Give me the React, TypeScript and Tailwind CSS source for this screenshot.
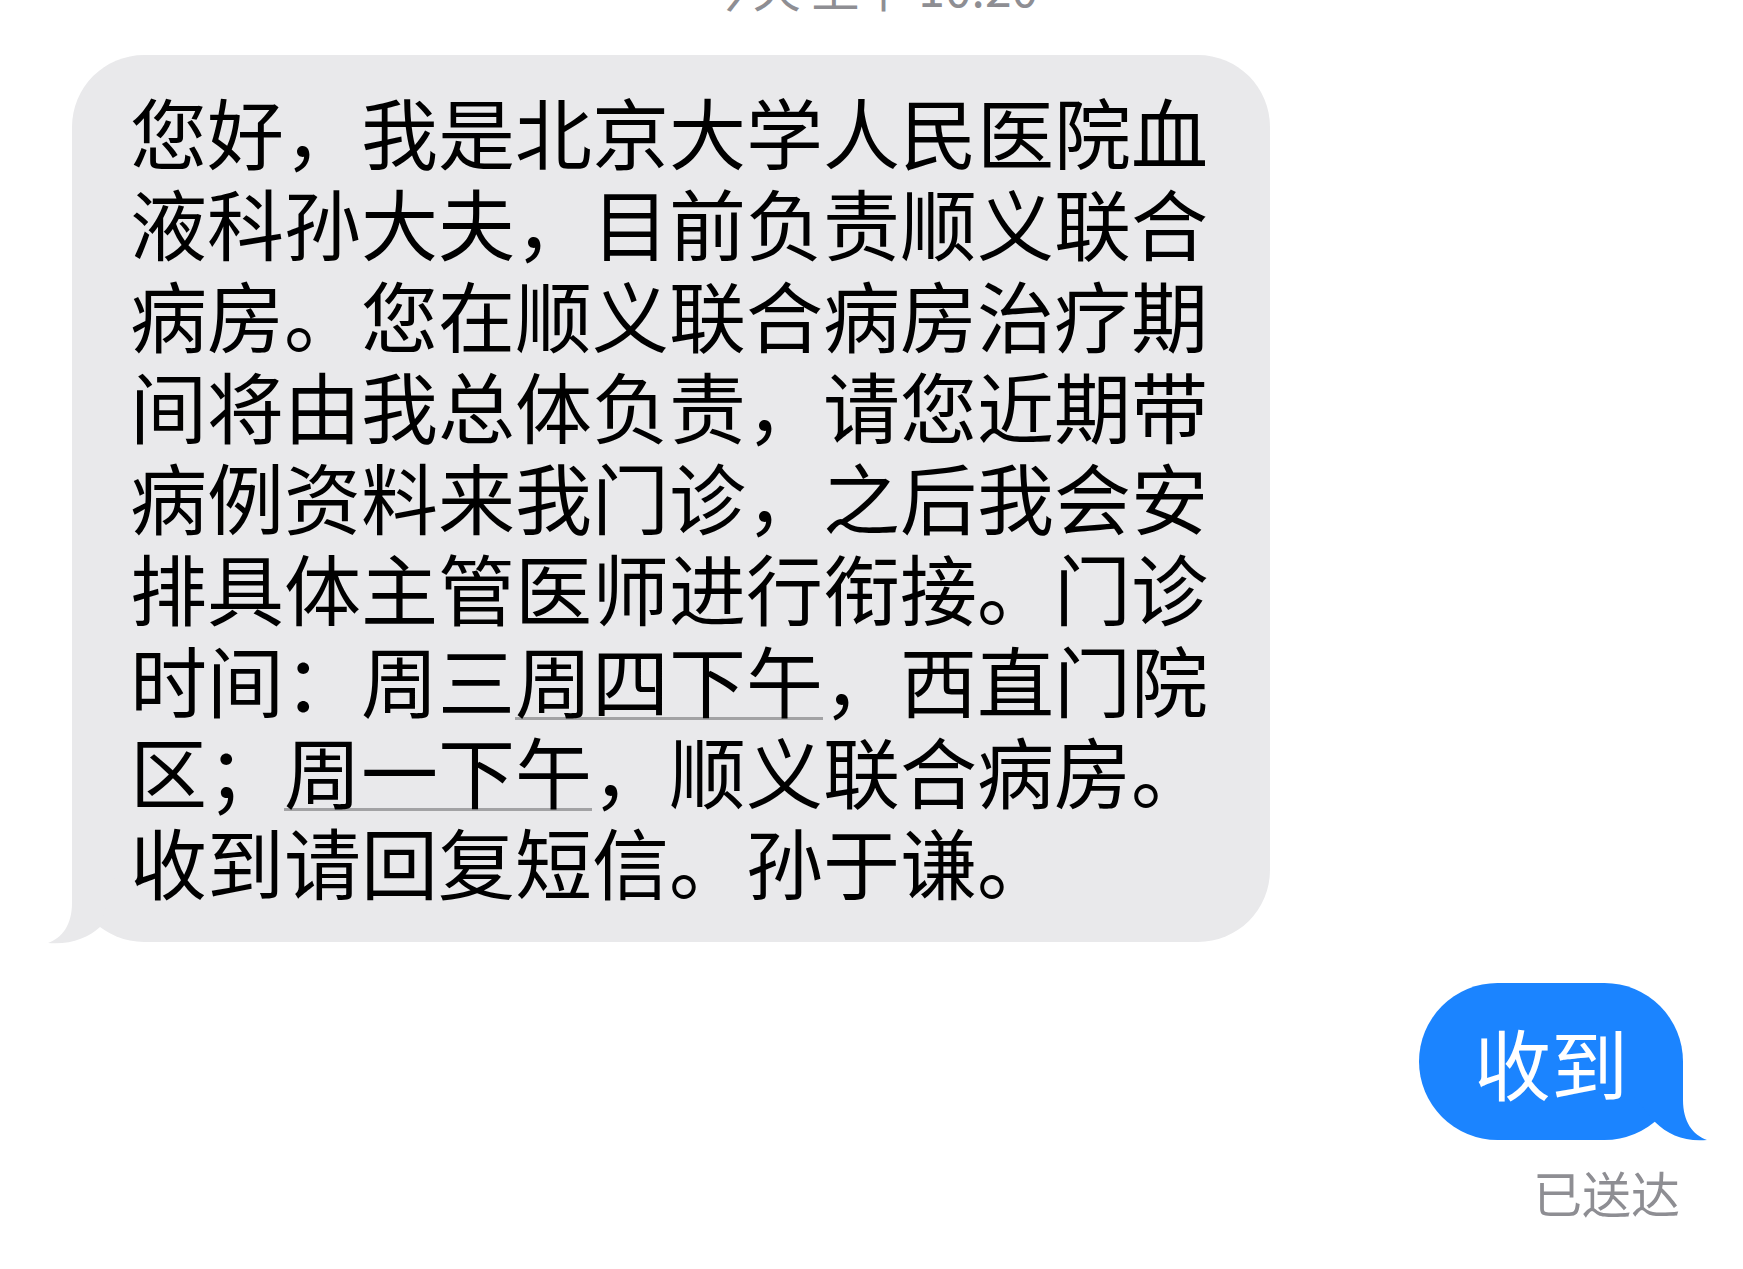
const lines: { text: string; link?: [number, number] }[] = [
  { text: '您好，我是北京大学人民医院血' },
  { text: '液科孙大夫，目前负责顺义联合' },
  { text: '病房。您在顺义联合病房治疗期' },
  { text: '间将由我总体负责，请您近期带' },
  { text: '病例资料来我门诊，之后我会安' },
  { text: '排具体主管医师进行衔接。门诊' },
  { text: '时间：周三周四下午，西直门院', link: [5, 9] },
  { text: '区；周一下午，顺义联合病房。', link: [2, 6] },
  { text: '收到请回复短信。孙于谦。' },
];

function Line({ text, link }: { text: string; link?: [number, number] }) {
  if (!link) return <div>{text}</div>;
  return (
    <div>
      {text.slice(0, link[0])}
      <span className="underline decoration-[#a2a2a4] decoration-[3px] underline-offset-[5px]">
        {text.slice(link[0], link[1])}
      </span>
      {text.slice(link[1])}
    </div>
  );
}

export default function App() {
  return (
    <div className="w-[1743px] h-[1269px] bg-white overflow-hidden font-['Noto_Sans_CJK_SC','Noto_Sans',sans-serif]">
      {/* timestamp, mostly scrolled off the top */}
      <div className="h-[55px] overflow-hidden">
        <p className="-mt-[38px] text-center text-[48px] leading-[48px] text-[#8e8e93]">今天 上午 10:20</p>
      </div>

      {/* incoming message */}
      <div className="relative ml-[72px] w-[1198px] rounded-[72px] bg-[#e9e9eb] pl-[58px] pt-[30px] pb-[36px]">
        <div className="relative z-10 text-[77px] leading-[91.25px] text-black whitespace-nowrap">
          {lines.map((l, i) => (
            <Line key={i} text={l.text} link={l.link} />
          ))}
        </div>
        <svg className="absolute -left-[24px] -bottom-[2px]" width="110" height="92" viewBox="0 0 110 92">
          <path d="M24 8 L24 51 C24 73 14 86 0 91 C22 93 40 86 52 75 L72 8 Z" fill="#e9e9eb" />
        </svg>
      </div>

      {/* outgoing message */}
      <div className="flex flex-col items-end mt-[41px] pr-[60px]">
        <div className="relative h-[157px] rounded-full bg-[#1b84ff] px-[55px] flex items-center">
          <span className="relative z-10 text-[77px] leading-none text-white">收到</span>
          <svg className="absolute -right-[24px] -bottom-[2px]" width="110" height="112" viewBox="0 0 110 112">
            <path d="M7 31 L86 31 L86 70 C86 92 96 105 110 110 C88 112 71 105 58 92 Z" fill="#1b84ff" />
          </svg>
        </div>
        <p className="mt-[22px] mr-[3px] text-[49px] leading-[60px] text-[#8e8e93]">已送达</p>
      </div>
    </div>
  );
}
